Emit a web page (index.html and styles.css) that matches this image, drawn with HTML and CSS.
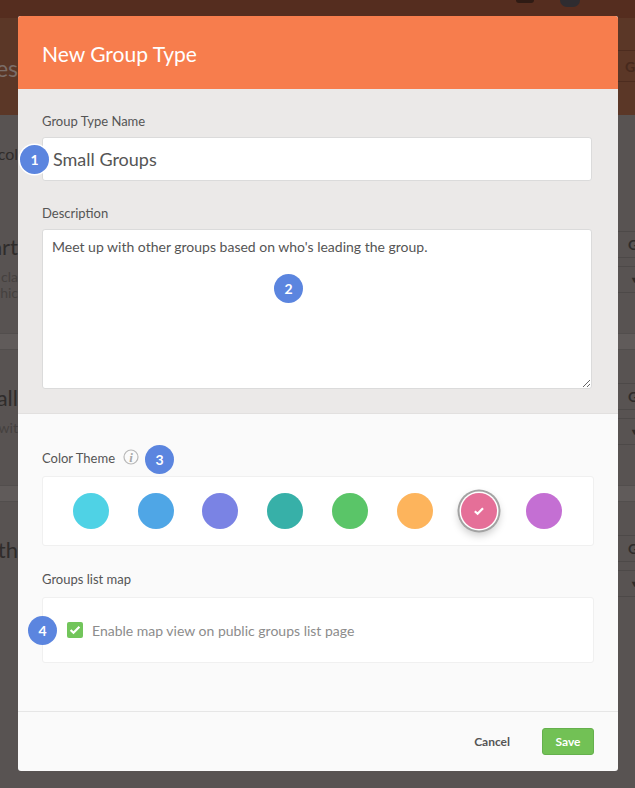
FILE: index.html
```html
<!DOCTYPE html>
<html lang="en">
<head>
    <meta charset="UTF-8">
    <meta name="viewport" content="width=device-width, initial-scale=1.0">
    <title>New Group Type</title>
    <link rel="stylesheet" href="styles.css">
</head>
<body>
    <div class="topbar">
        <div class="topbar-bell"></div>
        <div class="topbar-avatar"></div>
    </div>
    <div class="screen">
        <!-- page behind the modal, only the edges show -->
        <div class="side side-left">
            <div class="side-head"><span class="clip clip-title">es</span></div>
            <div class="clip-row clip-col">col</div>
            <div class="clip-row clip-big clip-art">art</div>
            <div class="clip-row clip-small clip-cla">cla</div>
            <div class="clip-row clip-small">whic</div>
            <div class="band band-first"></div>
            <div class="clip-row clip-big clip-all">all</div>
            <div class="clip-row clip-small clip-wit">wit</div>
            <div class="band band-second"></div>
            <div class="clip-row clip-big clip-th">th</div>
        </div>

        <div class="modal">
            <h2 class="modal-title">New Group Type</h2>
            <div class="modal-top">
                <div class="form-group">
                    <label class="field-label" for="groupName">Group Type Name</label>
                    <div class="field-wrap">
                        <input class="input-field" id="groupName" type="text" value="Small Groups">
                        <span class="badge badge-ring badge-one">1</span>
                    </div>
                </div>
                <div class="form-group">
                    <label class="field-label" for="groupDesc">Description</label>
                    <div class="field-wrap">
                        <textarea class="text-field" id="groupDesc">Meet up with other groups based on who's leading the group.</textarea>
                        <span class="badge badge-two">2</span>
                    </div>
                </div>
            </div>
            <div class="modal-body">
                <div class="theme-head">
                    <span class="field-label theme-label">Color Theme</span>
                    <svg class="info-icon" width="16" height="16" viewBox="0 0 16 16">
                        <circle cx="8" cy="8" r="7" fill="none" stroke="#b8b8b8" stroke-width="1.2"/>
                        <text x="8" y="12.5" text-anchor="middle" class="info-i">i</text>
                    </svg>
                    <span class="badge badge-three">3</span>
                </div>
                <div class="panel swatches">
                    <span class="swatch swatch-cyan"></span>
                    <span class="swatch swatch-blue"></span>
                    <span class="swatch swatch-indigo"></span>
                    <span class="swatch swatch-teal"></span>
                    <span class="swatch swatch-green"></span>
                    <span class="swatch swatch-orange"></span>
                    <span class="swatch swatch-pink selected">
                        <svg width="12" height="10" viewBox="0 0 12 10"><path d="M1.8 5.2 4.6 7.8 10 2.2" fill="none" stroke="#fff" stroke-width="2.2"/></svg>
                    </span>
                    <span class="swatch swatch-purple"></span>
                </div>
                <div class="field-label map-label">Groups list map</div>
                <div class="panel map-panel">
                    <span class="badge badge-four">4</span>
                    <span class="checkbox">
                        <svg width="12" height="10" viewBox="0 0 12 10"><path d="M1.6 5 4.5 7.8 10.4 1.8" fill="none" stroke="#fff" stroke-width="2.2"/></svg>
                    </span>
                    <span class="map-text">Enable map view on public groups list page</span>
                </div>
            </div>
            <div class="modal-footer">
                <button class="link-button">Cancel</button>
                <button class="save-button">Save</button>
            </div>
        </div>

        <div class="side side-right">
            <div class="side-head">
                <div class="right-btn right-btn-head">G</div>
            </div>
            <div class="right-block right-block-first">
                <div class="right-btn">G</div>
                <div class="right-btn right-caret">▾</div>
            </div>
            <div class="band"></div>
            <div class="right-block">
                <div class="right-btn">G</div>
                <div class="right-btn right-caret">▾</div>
            </div>
            <div class="band"></div>
            <div class="right-block">
                <div class="right-btn">G</div>
                <div class="right-btn right-caret">▾</div>
            </div>
        </div>
    </div>
</body>
</html>
```

FILE: styles.css
```css
* {
    box-sizing: border-box;
}
html, body {
    height: 100%;
}
body {
    margin: 0;
    height: 788px;
    overflow: hidden;
    font-family: Lato, Arial, sans-serif;
    background-color: #585352;
    color: #4a4a4a;
    position: relative;
}
.topbar {
    height: 16px;
    background-color: #552d1f;
    position: relative;
}
.topbar-bell {
    position: absolute;
    left: 516px;
    top: 0;
    width: 18px;
    height: 3px;
    background-color: #2f1b14;
    border-radius: 0 0 9px 9px;
}
.topbar-avatar {
    position: absolute;
    left: 560px;
    top: 0;
    width: 20px;
    height: 7px;
    background-color: #2e2c30;
    border-radius: 0 0 10px 10px;
}
.screen {
    display: flex;
    align-items: flex-start;
}
.side {
    overflow: hidden;
    height: 772px;
    color: #2f2c2b;
}
.side-left {
    width: 18px;
    text-align: right;
    white-space: nowrap;
}
.side-right {
    width: 17px;
}
.side-head {
    height: 99px;
    background-color: #5b3727;
    padding-top: 35px;
    border-top: 2px solid #552d1f;
}
.side-right .side-head {
    padding-top: 32px;
}
.clip {
    display: block;
}
.clip-title {
    font-size: 23px;
    line-height: 30px;
    color: #7a6d68;
    direction: rtl;
}
.clip-row {
    direction: rtl;
    overflow: hidden;
}
.clip-col {
    font-size: 16px;
    line-height: 20px;
    margin-top: 29px;
    color: #2f2c2b;
}
.clip-big {
    font-size: 22px;
    line-height: 26px;
}
.clip-small {
    font-size: 14px;
    line-height: 16px;
    color: #45413f;
}
.clip-art {
    margin-top: 70px;
}
.clip-cla {
    margin-top: 9px;
}
.band {
    height: 17px;
    background-color: #605b5a;
    border-top: 1px solid #524e4d;
    border-bottom: 1px solid #524e4d;
}
.band-first {
    margin-top: 32px;
}
.clip-all {
    margin-top: 35px;
}
.clip-wit {
    margin-top: 9px;
}
.band-second {
    margin-top: 49px;
}
.clip-th {
    margin-top: 35px;
}
.modal {
    width: 600px;
    height: 755px;
    background-color: #fafafa;
    border-radius: 3px;
    overflow: hidden;
    display: flex;
    flex-direction: column;
}
.modal-title {
    margin: 0;
    height: 73px;
    padding: 0 24px;
    background-color: #f77d4d;
    color: #fff;
    font-size: 21px;
    font-weight: 400;
    line-height: 76px;
}
.modal-top {
    height: 325px;
    padding: 24px 24px 0;
    background-color: #ebe9e8;
    border-bottom: 1px solid #e2e0df;
}
.form-group {
    margin-bottom: 24px;
}
.field-label {
    display: block;
    font-size: 13px;
    line-height: 16px;
    color: #555;
}
.field-wrap {
    position: relative;
    margin-top: 8px;
    width: 550px;
}
.input-field {
    display: block;
    width: 100%;
    height: 44px;
    padding: 0 10px;
    border: 1px solid #dbdbdb;
    border-radius: 3px;
    background-color: #fff;
    font-family: inherit;
    font-size: 18px;
    color: #555;
}
.text-field {
    display: block;
    width: 100%;
    height: 160px;
    padding: 8px 9px;
    border: 1px solid #dbdbdb;
    border-radius: 3px;
    background-color: #fff;
    font-family: inherit;
    font-size: 14px;
    line-height: 18px;
    color: #555;
}
.badge {
    position: absolute;
    width: 29px;
    height: 29px;
    border-radius: 50%;
    background-color: #5b85df;
    color: #fff;
    font-size: 14px;
    font-weight: 700;
    line-height: 29px;
    text-align: center;
}
.badge-ring {
    box-shadow: 0 0 0 1.5px #fff;
}
.badge-one {
    left: -22px;
    top: 8px;
}
.badge-two {
    left: 232px;
    top: 45px;
}
.modal-body {
    flex: 1;
    padding: 0 24px;
}
.theme-head {
    position: relative;
    height: 62px;
    padding-top: 35px;
    display: flex;
    align-items: flex-start;
}
.theme-label {
    margin-top: 1px;
}
.info-icon {
    margin: 0 0 0 8px;
}
.info-i {
    font-family: "Liberation Serif", serif;
    font-style: italic;
    font-weight: 700;
    font-size: 13px;
    fill: #a8a8a8;
}
.badge-three {
    left: 103px;
    top: 31px;
}
.panel {
    width: 552px;
    background-color: #fff;
    border: 1px solid #f0f0f0;
    border-radius: 3px;
}
.swatches {
    height: 70px;
    padding: 0 31px 0 30px;
    display: flex;
    align-items: center;
    justify-content: space-between;
}
.swatch {
    width: 36px;
    height: 36px;
    border-radius: 50%;
    display: flex;
    align-items: center;
    justify-content: center;
}
.swatch-cyan { background-color: #4fd2e5; }
.swatch-blue { background-color: #4fa6e6; }
.swatch-indigo { background-color: #7a83e4; }
.swatch-teal { background-color: #37b0a8; }
.swatch-green { background-color: #5ac568; }
.swatch-orange { background-color: #fdb45c; }
.swatch-pink { background-color: #e56f98; }
.swatch-purple { background-color: #c46fd3; }
.selected {
    box-shadow: 0 0 0 1.5px #fff, 0 0 0 3.5px #a3a3a3, 0 4px 8px 2px rgba(0, 0, 0, 0.22);
}
.map-label {
    margin-top: 25px;
}
.map-panel {
    position: relative;
    margin-top: 10px;
    height: 66px;
    padding-left: 24px;
    display: flex;
    align-items: center;
}
.badge-four {
    left: -15px;
    top: 18px;
}
.checkbox {
    width: 16px;
    height: 16px;
    border-radius: 2px;
    background-color: #72c55b;
    display: flex;
    align-items: center;
    justify-content: center;
}
.map-text {
    margin-left: 9px;
    font-size: 14px;
    color: #8c8c8c;
}
.modal-footer {
    height: 60px;
    border-top: 1px solid #e6e6e6;
    padding: 16px 24px 0 0;
    display: flex;
    align-items: flex-start;
    justify-content: flex-end;
}
.link-button {
    border: none;
    background: none;
    padding: 0;
    height: 27px;
    font-family: inherit;
    font-size: 12px;
    font-weight: 700;
    color: #555;
    margin-right: 32px;
}
.save-button {
    width: 52px;
    height: 27px;
    padding: 0;
    border: 1px solid #65b04d;
    border-radius: 3px;
    background-color: #72c155;
    color: #fff;
    font-family: inherit;
    font-size: 12px;
    font-weight: 700;
}
.right-btn {
    height: 27px;
    padding-left: 10px;
    border-top: 1px solid #4d4948;
    border-bottom: 1px solid #4d4948;
    font-size: 14px;
    font-weight: 700;
    line-height: 25px;
    color: #2f2c2b;
}
.right-btn-head {
    height: 32px;
    padding-left: 7px;
    line-height: 32px;
    border-color: #4d2c1f;
    color: #47291d;
}
.right-caret {
    margin-top: 8px;
    padding-left: 14px;
    font-size: 10px;
}
.right-block {
    padding-top: 33px;
    height: 135px;
}
.right-block-first {
    padding-top: 116px;
    height: 218px;
}
```
